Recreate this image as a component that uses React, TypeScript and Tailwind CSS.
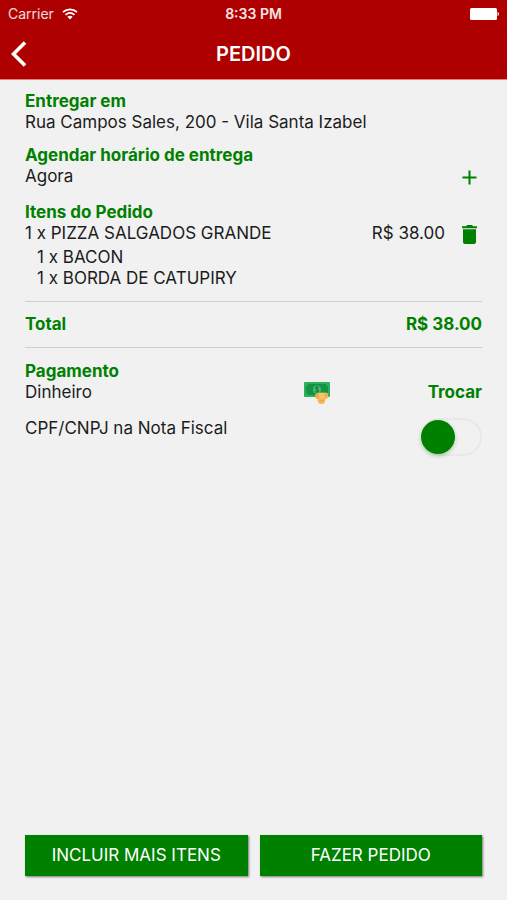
import { useState } from "react";
import type { ReactNode } from "react";

function StatusBar() {
  return (
    <div className="flex h-7 items-center justify-between px-2 text-sm leading-7">
      <div className="flex flex-1 items-center gap-2 text-white/85">
        <span>Carrier</span>
        <svg width="16" height="12" viewBox="0 0 16 12" fill="none" stroke="#fff" strokeWidth="1.7" aria-hidden="true">
          <path d="M1 4.2C5 .4 11 .4 15 4.2" />
          <path d="M3.5 6.9C6.2 4.4 9.8 4.4 12.5 6.9" />
          <path d="M8 11.4L5.4 8.8C6.9 7.5 9.1 7.5 10.6 8.8Z" fill="#fff" stroke="none" />
        </svg>
      </div>
      <span className="font-semibold text-white/90">8:33 PM</span>
      <div className="flex flex-1 justify-end">
        <svg width="30" height="12" viewBox="0 0 30 12" fill="#fff" aria-hidden="true">
          <rect x="1" width="27" height="12" rx="1.5" />
          <path d="M28.600 4C30.400 4.600 30.400 7.400 28.600 8Z" />
        </svg>
      </div>
    </div>
  );
}

function Section({ title, children }: { title: string; children: ReactNode }) {
  return (
    <section>
      <h2 className="font-bold text-[#008000]">{title}</h2>
      {children}
    </section>
  );
}

function MoneyIcon() {
  return (
    <svg width="26" height="24" viewBox="0 0 26 24" aria-hidden="true">
      <rect y="1" width="26" height="15" rx="1" fill="#2fae5b" />
      <path d="M4 3H22C22 4.500 23 5.500 24 5.500V11.500C23 11.500 22 12.500 22 14H4C4 12.500 3 11.500 2 11.500V5.500C3 5.500 4 4.500 4 3Z" fill="#149447" />
      <circle cx="13" cy="8.500" r="4" fill="#45b96c" />
      <path d="M14.800 6.500C13.500 5.300 11.300 5.700 11.500 7.200C11.700 8.700 14.700 8.200 14.700 9.900C14.700 11.300 12.400 11.500 11.200 10.400M13 5V12" fill="none" stroke="#0d7d38" strokeWidth="1" />
      <circle cx="14.500" cy="15" r="3.300" fill="#f2ad4a" />
      <circle cx="21" cy="14.800" r="3.300" fill="#f6b553" />
      <circle cx="17.500" cy="19.300" r="3.700" fill="#f6b553" />
      <circle cx="17.800" cy="14.600" r="3.200" fill="#f9c46c" />
      <path d="M13.500 15H15M20.500 14.500H22M16.800 19.500H18.500" stroke="#e39a3c" strokeWidth="1.200" />
    </svg>
  );
}

export default function App() {
  const [invoice, setInvoice] = useState(false);

  return (
    <div className="flex min-h-screen flex-col bg-[#f1f1f1] font-['Inter','Liberation_Sans',sans-serif] text-[17px] leading-[21px] text-[#1c1c1c]">
      <header className="border-b border-[#e68080] bg-[#ae0000] text-white">
        <StatusBar />
        <div className="grid h-[51px] grid-cols-[48px_1fr_48px] items-center">
          <button type="button" aria-label="Voltar" className="flex h-12 items-center pl-[11px]">
            <svg width="16" height="26" viewBox="0 0 16 26" fill="none" stroke="#fff" strokeWidth="3.600" aria-hidden="true">
              <path d="M14 1.500L2.500 13L14 24.500" />
            </svg>
          </button>
          <h1 className="text-center text-xl font-semibold">PEDIDO</h1>
        </div>
      </header>

      <main className="flex flex-1 flex-col px-[25px] pt-[11px]">
        <Section title="Entregar em">
          <p>Rua Campos Sales, 200 - Vila Santa Izabel</p>
        </Section>

        <div className="mt-3">
          <Section title="Agendar horário de entrega">
            <div className="flex items-center justify-between">
              <p>Agora</p>
              <button type="button" aria-label="Agendar" className="flex h-[21px] w-[25px] items-end justify-center">
                <svg width="15" height="17" viewBox="0 0 15 17" stroke="#008000" strokeWidth="2" aria-hidden="true">
                  <path d="M0.500 7.500H14.500M7.500 0.500V14.500" />
                </svg>
              </button>
            </div>
          </Section>
        </div>

        <div className="mt-[15px] border-b border-[#cfcfcf] pb-3">
          <Section title="Itens do Pedido">
            <div className="flex items-center">
              <p className="flex-1">1 x PIZZA SALGADOS GRANDE</p>
              <p>R$ 38.00</p>
              <button type="button" aria-label="Remover item" className="ml-3 flex h-[21px] w-[25px] items-end justify-center">
                <svg width="15" height="19" viewBox="0 0 15 19" fill="#008000" aria-hidden="true">
                  <path d="M0 1.300H4L5 0H10L11 1.300H15V3.200H0Z" />
                  <path d="M1 4.300H14V17Q14 19 12 19H3Q1 19 1 17Z" />
                </svg>
              </button>
            </div>
            <ul className="mt-[3px] pl-3">
              <li>1 x BACON</li>
              <li>1 x BORDA DE CATUPIRY</li>
            </ul>
          </Section>
        </div>

        <div className="flex justify-between border-b border-[#cfcfcf] py-3 font-bold text-[#008000]">
          <span>Total</span>
          <span>R$ 38.00</span>
        </div>

        <div className="mt-[13px]">
          <Section title="Pagamento">
            <div className="flex h-[21px] items-center">
              <p className="w-[61%]">Dinheiro</p>
              <MoneyIcon />
              <button type="button" className="ml-auto font-bold text-[#008000]">
                Trocar
              </button>
            </div>
          </Section>
        </div>

        <div className="mt-[15px] flex items-start justify-between">
          <label htmlFor="invoice">CPF/CNPJ na Nota Fiscal</label>
          <input
            id="invoice"
            type="checkbox"
            role="switch"
            checked={invoice}
            onChange={(event) => setInvoice(event.target.checked)}
            className="flex h-[38px] w-[61px] appearance-none items-center rounded-full border-2 border-[#e8e8e8] before:-ml-0.5 before:size-[34px] before:rounded-full before:bg-[#008000] before:shadow-[0_2px_4px_rgba(0,128,0,0.3)] checked:justify-end"
          />
        </div>

        <div className="mt-auto grid grid-cols-2 gap-3 pb-6">
          <button type="button" className="h-[41px] bg-[#008000] text-white shadow-[1px_1px_2px_rgba(0,0,0,0.5)]">
            INCLUIR MAIS ITENS
          </button>
          <button type="button" className="h-[41px] bg-[#008000] text-white shadow-[1px_1px_2px_rgba(0,0,0,0.5)]">
            FAZER PEDIDO
          </button>
        </div>
      </main>
    </div>
  );
}
